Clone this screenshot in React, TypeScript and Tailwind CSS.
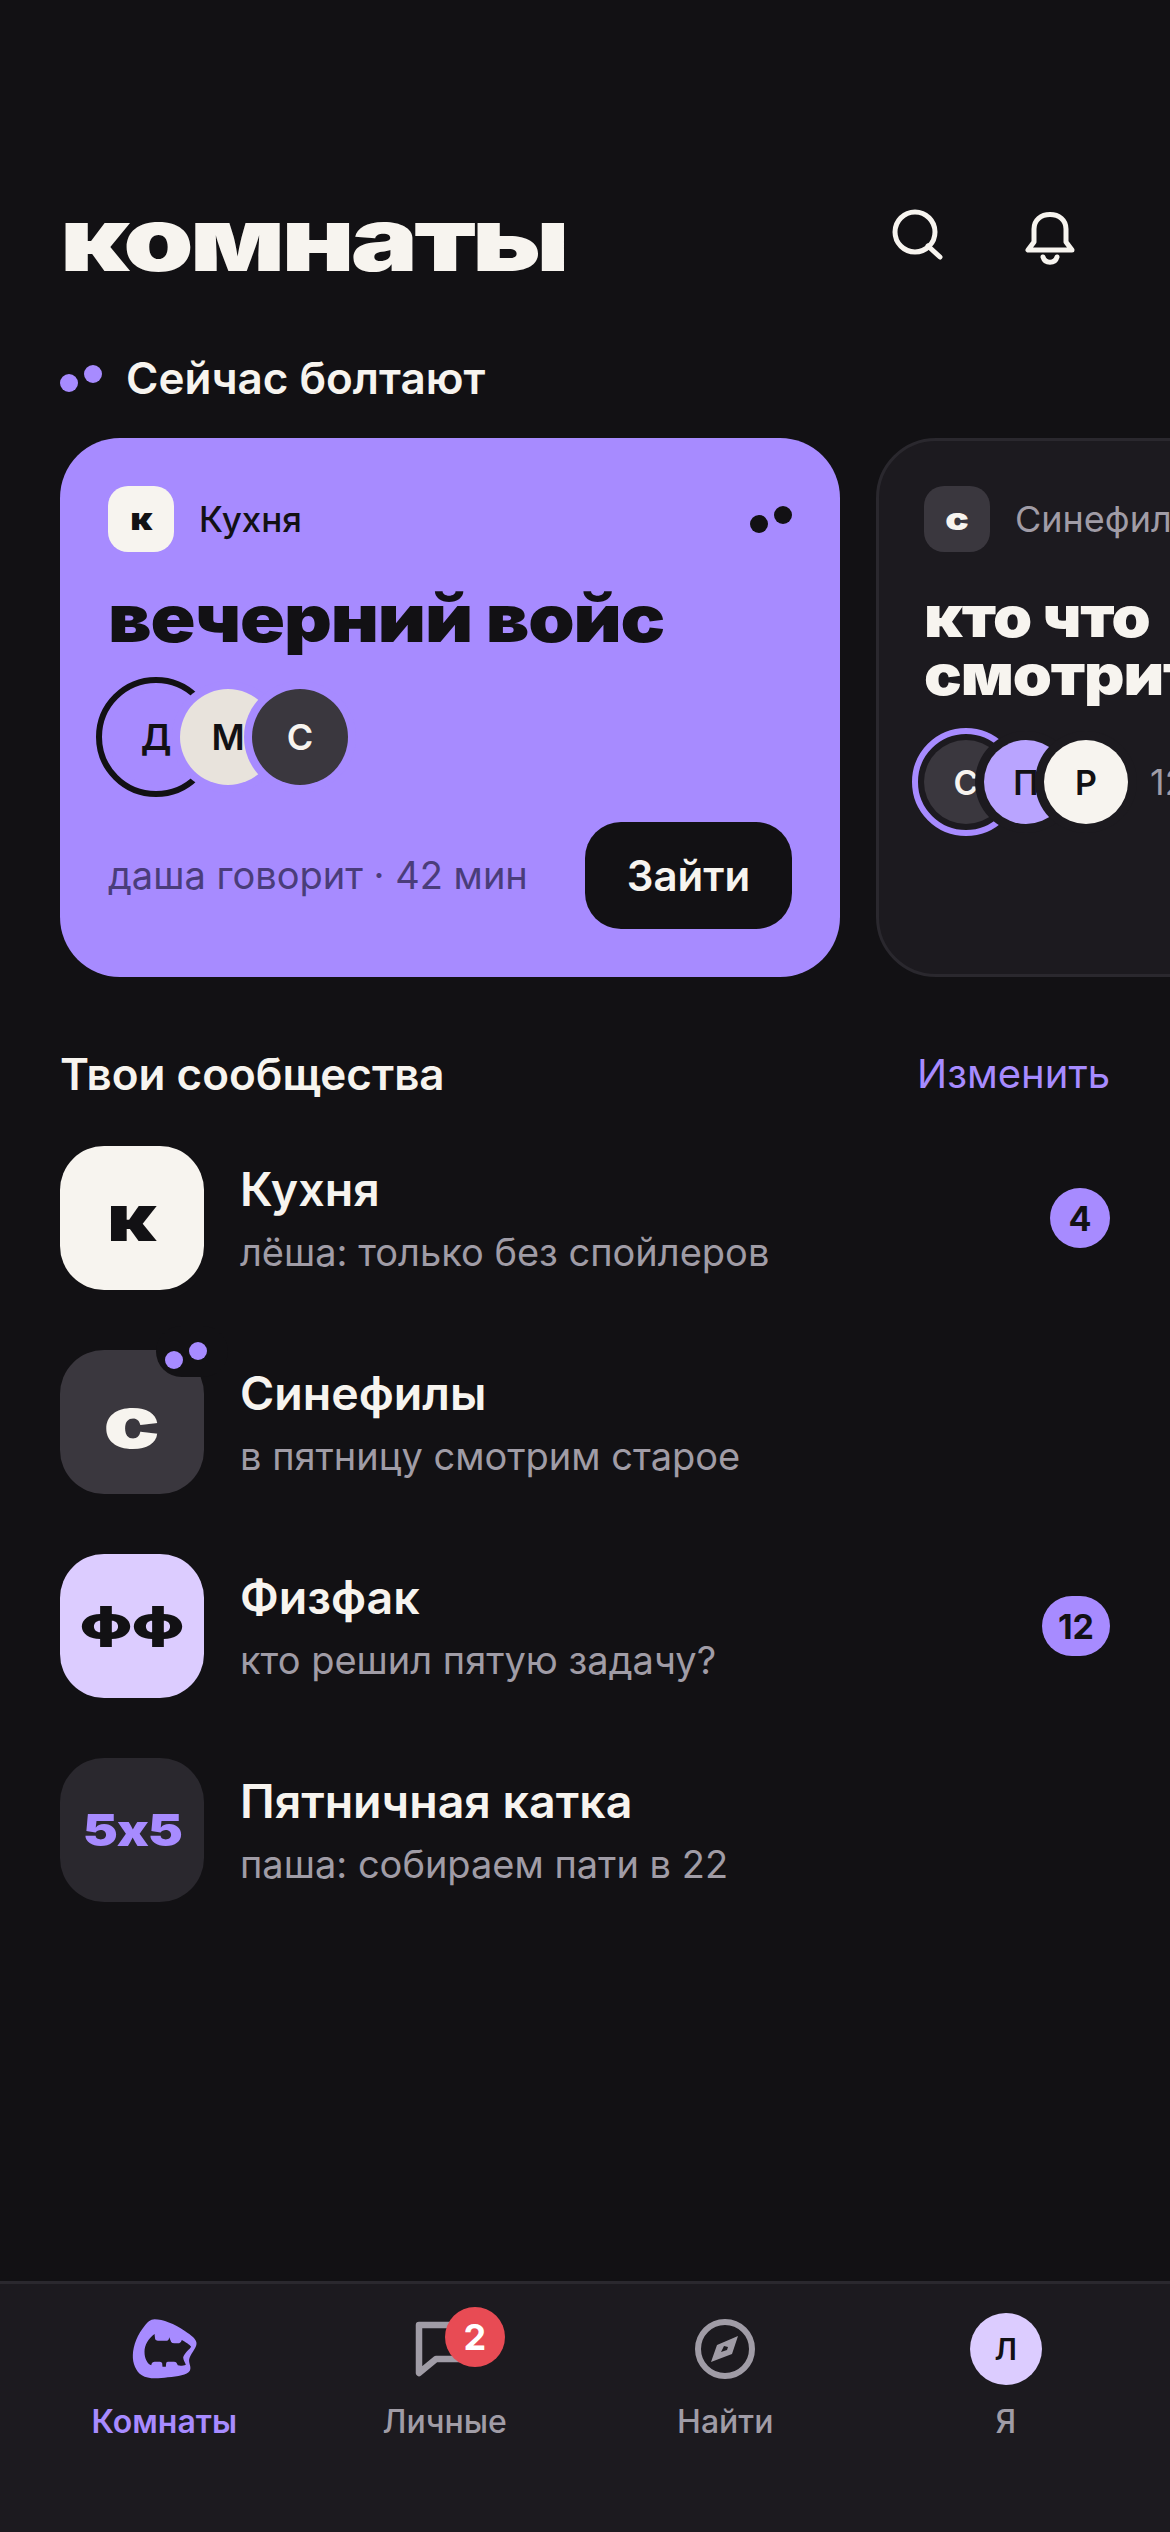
import React from 'react';

const bodyFont = "font-['Inter','Noto_Sans',sans-serif]";

const Wide = ({ children, className }: { children: React.ReactNode; className: string }) => (
  <span className={`inline-block font-black whitespace-nowrap ${className}`}>{children}</span>
);

const Dots = ({ className }: { className: string }) => (
  <div className="relative w-[42px] h-[27px] shrink-0">
    <div className={`absolute left-0 bottom-0 w-[18px] h-[18px] rounded-full ${className}`} />
    <div className={`absolute right-0 top-0 w-[18px] h-[18px] rounded-full ${className}`} />
  </div>
);

const Avatar = ({ letter, size, cut, className, z, ring }: { letter: string; size: string; cut: string; className: string; z: string; ring?: string }) => (
  <div className={`relative ${z} ${size} shrink-0`}>
    {ring && <div className={ring} />}
    <div className={`relative w-full h-full rounded-full flex items-center justify-center ${cut} ${className}`}>
      {letter}
    </div>
  </div>
);

const SearchIcon = () => (
  <svg width="54" height="60" viewBox="0 0 54 60" fill="none" stroke="#f7f4ef" strokeWidth="5" strokeLinecap="round">
    <circle cx="23" cy="23" r="20" />
    <path d="M36 37 L48 48" />
  </svg>
);

const BellIcon = () => (
  <svg width="52" height="60" viewBox="0 0 52 60" fill="none" stroke="#f7f4ef" strokeWidth="5" strokeLinecap="round" strokeLinejoin="round">
    <path d="M4 41 H48 L42 33 V20 C42 11 35 5.5 26 5.5 C17 5.5 10 11 10 20 V33 Z" />
    <path d="M19 48 C21 55 31 55 33 48" />
  </svg>
);

const BatLogo = () => (
  <svg width="67" height="62" viewBox="20 24 200 186">
    <path
      fillRule="evenodd"
      fill="#a78bff"
      d="M90 28 C115 28 150 42 180 62 C200 75 218 88 216 102 C214 118 198 130 194 148 C192 160 202 172 196 182 C188 196 160 198 130 202 C100 206 70 208 52 196 C34 184 24 160 25 135 C26 105 40 72 60 48 C68 38 78 28 90 28 Z M90 72 L92 88 Q94 92 100 92 L128 92 Q133 92 134 82 L140 96 Q142 100 150 100 L164 100 Q170 98 172 90 C182 96 196 104 200 110 C195 118 180 128 176 142 C176 150 182 158 184 164 C176 168 165 168 160 166 L156 158 Q154 155 148 155 L130 155 Q125 155 125 160 L124 170 L114 170 L113 160 Q112 155 106 155 L90 155 Q84 155 82 160 L80 166 C68 160 60 145 60 125 C60 105 72 85 90 72 Z"
    />
  </svg>
);

const ChatIcon = () => (
  <svg width="60" height="56" viewBox="0 0 60 56" fill="none" stroke="#a09ca6" strokeWidth="6.5" strokeLinejoin="round">
    <path d="M4 4 H54 V38 H21 L4 52 Z" />
  </svg>
);

const CompassIcon = () => (
  <svg width="60" height="60" viewBox="0 0 60 60" fill="none">
    <circle cx="30" cy="30" r="27" stroke="#a09ca6" strokeWidth="6" />
    <path fillRule="evenodd" fill="#a09ca6" d="M43 17 L37 35 L16 43 L22 26 Z M29 27 L26 33 L32 31 L33 28 Z" />
  </svg>
);

const communities = [
  { name: 'Кухня', sub: 'лёша: только без спойлеров', letter: 'к', tile: 'bg-[#f7f4ef] text-[#121114]', text: 'text-[64px] scale-x-[1.25]', badge: '4', dots: false },
  { name: 'Синефилы', sub: 'в пятницу смотрим старое', letter: 'с', tile: 'bg-[#3a373e] text-[#f7f4ef]', text: 'text-[72px] scale-x-[1.3]', badge: '', dots: true },
  { name: 'Физфак', sub: 'кто решил пятую задачу?', letter: 'фф', tile: 'bg-[#dcccff] text-[#121114]', text: 'text-[46px] scale-x-[1.3] -translate-y-[4px]', badge: '12', dots: false },
  { name: 'Пятничная катка', sub: 'паша: собираем пати в 22', letter: '5х5', tile: 'bg-[#2a282e] text-[#a78bff]', text: 'text-[44px] tracking-[-1px] scale-x-[1.2]', badge: '', dots: false },
];

const tabs = [
  { label: 'Комнаты', active: true },
  { label: 'Личные', active: false },
  { label: 'Найти', active: false },
  { label: 'Я', active: false },
];

export default function App() {
  return (
    <div className={`w-[1170px] h-[2532px] bg-[#121114] flex flex-col overflow-hidden ${bodyFont}`}>
      <div className="flex-1 pt-[199px]">
        {/* header */}
        <div className="flex items-center justify-between pl-[60px] pr-[94px] h-[80px]">
          <Wide className="text-[88px] leading-none tracking-[-3px] text-[#f7f4ef] origin-left scale-x-[1.28]">комнаты</Wide>
          <div className="flex items-center gap-[78px]">
            <SearchIcon />
            <BellIcon />
          </div>
        </div>

        <div className="flex items-center gap-[24px] pl-[60px] mt-[69px] h-[60px]">
          <Dots className="bg-[#a78bff]" />
          <span className="text-[44px] font-semibold text-[#f7f4ef]">Сейчас болтают</span>
        </div>

        {/* live rooms */}
        <div className="flex gap-[36px] pl-[60px] mt-[30px] overflow-hidden">
          <div className="w-[780px] h-[539px] shrink-0 rounded-[60px] bg-[#a78bff] p-[48px] flex flex-col text-[#121114]">
            <div className="flex items-center justify-between h-[66px]">
              <div className="flex items-center gap-[25px]">
                <div className="w-[66px] h-[66px] rounded-[20px] bg-[#f7f4ef] flex items-center justify-center">
                  <Wide className="text-[30px] leading-none scale-x-[1.2]">к</Wide>
                </div>
                <span className="text-[35px] font-medium">Кухня</span>
              </div>
              <Dots className="bg-[#121114]" />
            </div>
            <Wide className="text-[66px] leading-[72px] tracking-[-1px] mt-[30px] origin-left scale-x-[1.125]">вечерний войс</Wide>
            <div className="flex items-center mt-[35px] text-[36px] font-semibold">
              <Avatar letter="Д" size="w-[96px] h-[96px]" z="z-0" cut="" className="bg-[#a78bff] text-[#121114]" ring="absolute -inset-[12px] rounded-full border-[6px] border-[#121114]" />
              <div className="-ml-[24px]">
                <Avatar letter="М" size="w-[96px] h-[96px]" z="z-10" cut="shadow-[0_0_0_8px_#a78bff]" className="bg-[#e8e3dc] text-[#121114]" />
              </div>
              <div className="-ml-[24px]">
                <Avatar letter="С" size="w-[96px] h-[96px]" z="z-20" cut="shadow-[0_0_0_8px_#a78bff]" className="bg-[#3a373e] text-[#f7f4ef]" />
              </div>
            </div>
            <div className="flex items-center justify-between mt-auto">
              <span className="text-[38px] text-[#4a3d7a]">даша говорит · 42 мин</span>
              <div className="w-[207px] h-[107px] rounded-[36px] bg-[#121114] text-[#f7f4ef] text-[42px] font-semibold flex items-center justify-center">
                Зайти
              </div>
            </div>
          </div>

          <div className="w-[780px] h-[539px] shrink-0 rounded-[60px] bg-[#1c1a1f] border-[3px] border-[#2a282e] p-[45px] flex flex-col text-[#f7f4ef]">
            <div className="flex items-center gap-[25px] h-[66px]">
              <div className="w-[66px] h-[66px] rounded-[20px] bg-[#3a373e] flex items-center justify-center">
                <Wide className="text-[30px] leading-none scale-x-[1.3]">с</Wide>
              </div>
              <span className="text-[36px] text-[#a09ca6]">Синефилы</span>
            </div>
            <Wide className="text-[56px] leading-[58px] tracking-[-1px] mt-[36px] origin-left scale-x-[1.12]">
              кто что<br />смотрит
            </Wide>
            <div className="flex items-center mt-[36px] text-[34px] font-semibold">
              <Avatar letter="С" size="w-[84px] h-[84px]" z="z-0" cut="" className="bg-[#3a373e] text-[#f7f4ef]" ring="absolute -inset-[12px] rounded-full border-[6px] border-[#a78bff]" />
              <div className="-ml-[24px]">
                <Avatar letter="П" size="w-[84px] h-[84px]" z="z-10" cut="shadow-[0_0_0_9px_#1c1a1f]" className="bg-[#b9a4ff] text-[#121114]" />
              </div>
              <div className="-ml-[24px]">
                <Avatar letter="Р" size="w-[84px] h-[84px]" z="z-20" cut="shadow-[0_0_0_9px_#1c1a1f]" className="bg-[#f7f4ef] text-[#121114]" />
              </div>
              <span className="ml-[22px] text-[36px] font-normal text-[#a09ca6]">12 слушают</span>
            </div>
          </div>
        </div>

        {/* communities */}
        <div className="flex items-center justify-between px-[60px] mt-[67px] h-[60px]">
          <span className="text-[44px] font-semibold text-[#f7f4ef]">Твои сообщества</span>
          <span className="text-[40px] text-[#a78bff]">Изменить</span>
        </div>

        <div className="flex flex-col gap-[60px] px-[60px] mt-[42px]">
          {communities.map((c) => (
            <div key={c.name} className="flex items-center h-[144px]">
              <div className="relative w-[144px] h-[144px] shrink-0">
                <div className={`w-full h-full rounded-[44px] overflow-hidden flex items-center justify-center ${c.tile}`}>
                  <Wide className={`leading-none ${c.text}`}>{c.letter}</Wide>
                </div>
                {c.dots && (
                  <div className="absolute left-[96px] -top-[24px] w-[72px] h-[51px] rounded-[26px] bg-[#121114]">
                    <div className="absolute left-[9px] top-[25px] w-[18px] h-[18px] rounded-full bg-[#a78bff]" />
                    <div className="absolute left-[33px] top-[16px] w-[18px] h-[18px] rounded-full bg-[#a78bff]" />
                  </div>
                )}
              </div>
              <div className="flex-1 ml-[36px] flex flex-col gap-[13px]">
                <span className="text-[46.5px] leading-[54px] font-semibold text-[#f7f4ef]">{c.name}</span>
                <span className="text-[38px] leading-[46px] text-[#a09ca6]">{c.sub}</span>
              </div>
              {c.badge && (
                <div className="h-[60px] min-w-[60px] px-[16px] rounded-full bg-[#a78bff] text-[#121114] text-[34px] font-bold flex items-center justify-center">
                  {c.badge}
                </div>
              )}
            </div>
          ))}
        </div>
      </div>

      {/* tab bar */}
      <div className="h-[251px] shrink-0 bg-[#1c1a1f] border-t-[3px] border-[#2a282e] grid grid-cols-4 px-[24px]">
        {tabs.map((t) => (
          <div key={t.label} className="flex flex-col items-center pt-[29px]">
            <div className="relative h-[72px] flex items-center justify-center">
              {t.label === 'Комнаты' && <BatLogo />}
              {t.label === 'Личные' && (
                <>
                  <ChatIcon />
                  <div className="absolute left-[30px] -top-[6px] w-[60px] h-[60px] rounded-full bg-[#e84b54] text-white text-[36px] font-bold flex items-center justify-center">
                    2
                  </div>
                </>
              )}
              {t.label === 'Найти' && <CompassIcon />}
              {t.label === 'Я' && (
                <div className="w-[72px] h-[72px] rounded-full bg-[#dcccff] text-[#121114] text-[30px] font-semibold flex items-center justify-center">
                  Л
                </div>
              )}
            </div>
            <span className={`mt-[16px] text-[32px] leading-[42px] ${t.active ? 'font-semibold text-[#a78bff]' : 'font-medium text-[#a09ca6]'}`}>
              {t.label}
            </span>
          </div>
        ))}
      </div>
    </div>
  );
}
